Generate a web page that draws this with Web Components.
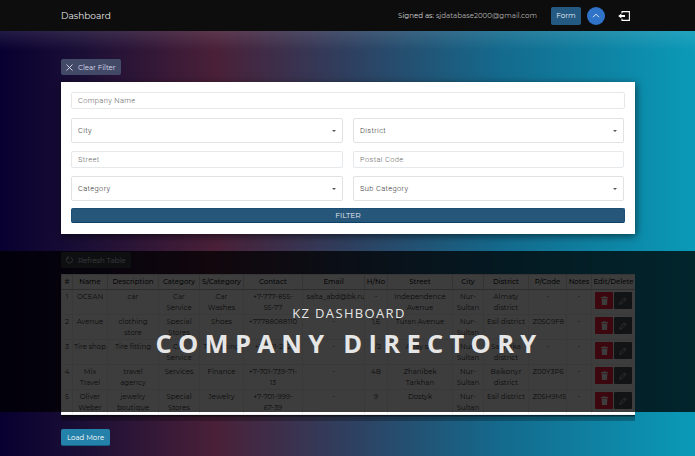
<!DOCTYPE html>
<html><head><meta charset="utf-8"><style>
html,body{margin:0;height:456px;overflow:hidden}
body{font-family:Montserrat,"Open Sans","Liberation Sans",sans-serif}
</style></head><body>
<dash-page></dash-page>
<script>
const ICONS={
x:'<svg width="7" height="7" viewBox="0 0 7 7"><path d="M.5.5l6 6M6.5.5l-6 6" stroke="currentColor" stroke-width=".9" fill="none"/></svg>',
up:'<svg width="8" height="5" viewBox="0 0 8 5"><path d="M1 4.2l3-3 3 3" stroke="currentColor" stroke-width="1" fill="none"/></svg>',
out:'<svg width="12" height="10" viewBox="0 0 12 10"><path d="M4 2.3V.6h7.4v8.8H4V7.7" stroke="#fff" stroke-width="1.1" fill="none"/><path d="M.2 5L3.4 2.4V4H7v2H3.4v1.6z" fill="#fff"/></svg>',
refresh:'<svg width="7" height="8" viewBox="0 0 8 9"><path d="M2.4 1.4A3.4 3.4 0 1 0 5.6 1.4" stroke="currentColor" stroke-width=".9" fill="none"/><path d="M2.6 0v2.6H0" stroke="currentColor" stroke-width=".7" fill="none"/></svg>',
trash:'<svg width="7" height="9" viewBox="0 0 7 9"><path d="M0 1h2.2L2.6.3h1.8l.4.7H7v1H0zM.6 2.6h5.8L6 9H1z" fill="currentColor"/></svg>',
pen:'<svg width="8" height="8" viewBox="0 0 10 10"><path d="M1 9l.5-2.4L7 1.2 8.8 3 3.4 8.5zM6.2 2l1.8 1.8" stroke="currentColor" stroke-width=".9" fill="none"/></svg>'};
function el(name,html,css){customElements.define(name,class extends HTMLElement{constructor(){super();const s=this.attachShadow({mode:'open'});s.innerHTML='<style>'+css+'</style>'+(typeof html==='function'?html(this):html)}})}
el('nav-bar',`<span class="brand">Dashboard</span><span class="sp"></span><span class="who">Signed as: <i>sjdatabase2000@gmail.com</i></span><span class="form">Form</span><span class="up">${ICONS.up}</span><span class="out">${ICONS.out}</span>`,
`:host{display:flex;align-items:center;height:31px;background:#0d0d0d;padding:0 65px 0 61px;box-sizing:border-box;color:#fff}
.brand{font-size:9px;color:#e8e8e8}.sp{flex:1}.who{font-size:7.1px;color:#d8d8d8;margin-right:14px}i{font-style:normal;color:#b4b4b4}
.form{background:#245a82;border-radius:2px;font-size:7.2px;width:30px;height:18px;display:flex;align-items:center;justify-content:center;margin-right:6px;color:#e8eef3}
.up{width:18px;height:18px;border-radius:50%;background:#2f74c9;display:flex;align-items:center;justify-content:center;margin-right:13px;color:#dfe9f6}
.out{display:flex}`);
el('text-field',h=>`<span>${h.getAttribute('label')}</span>`,
`:host{display:flex;align-items:center;height:15px;border:1px solid #e6e9ec;border-radius:2px;padding:0 6px;font:300 7.5px Roboto,sans-serif;letter-spacing:.35px;color:#666;background:#fff}`);
el('select-field',h=>`<span>${h.getAttribute('label')}</span><b></b>`,
`:host{display:flex;align-items:center;justify-content:space-between;height:23px;border:1px solid #e2e2e2;border-radius:2px;padding:0 6px;font:300 7.5px Roboto,sans-serif;letter-spacing:.35px;color:#333;background:#fff}
b{width:0;height:0;border:2px solid transparent;border-top:2.5px solid #555;border-bottom:0}`);
el('filter-card',`<text-field label="Company Name"></text-field>
<div class="g"><select-field label="City"></select-field><select-field label="District"></select-field>
<text-field label="Street"></text-field><text-field label="Postal Code"></text-field>
<select-field label="Category"></select-field><select-field label="Sub Category"></select-field></div>
<div class="btn">FILTER</div>`,
`:host{display:block;background:#fff;padding:10px 10px 11px;box-shadow:1px 2px 8px rgba(0,0,0,.55)}
.g{display:grid;grid-template-columns:272px 271px;gap:8px 10px;margin-top:9px}
.btn{margin-top:7px;height:15px;background:#26567a;border:1px solid #1c4f75;border-bottom:1px solid #0f3f63;border-radius:2px;color:#e6edf3;font-size:7.5px;line-height:14px;text-align:center;box-sizing:border-box}`);
el('ui-btn',h=>`<slot></slot>`,
`:host{display:inline-flex;align-items:center;gap:5px;height:16px;padding:0 5px;border-radius:2px;font-size:7px;box-sizing:border-box}`);
const rows=[
['1','OCEAN','car','Car Service','Car Washes','+7-777-855-<br>55-77','salta_abd@bk.ru','-','Independence Avenue','Nur-Sultan','Almaty district','-','-'],
['2','Avenue','clothing store','Special Stores','Shoes','+77788088110','-','1,E','Turan Avenue','Nur-Sultan','Esil district','Z05G9F8','-'],
['3','Tire shop','Tire fitting','Car Service','Tire fitting','+7-701-262','-','2/2','Abay sq.','Nur-Sultan','Saryarka district','-','-'],
['4','Mix Travel','travel agency','Services','Finance','+7-701-739-71-<br>13','-','4B','Zhanibek Tarkhan','Nur-Sultan','Baikonyr district','Z00Y3P6','-'],
['5','Oliver Weber','jewelry boutique','Special Stores','Jewelry','+7-701-999-<br>67-39','-','9','Dostyk','Nur-Sultan','Esil district','Z05H9M5','-']];
const heads=['#','Name','Description','Category','S/Category','Contact','Email','H/No','Street','City','District','P/Code','Notes','Edit/Delete'];
const widths=[11,35,51,41,44,59,62,23,65,31,45,38,25,44];
const tight=[0,1,5,10];
el('data-table',`<table><colgroup>${widths.map(w=>`<col style="width:${w}px">`).join('')}</colgroup><thead><tr>${heads.map(h=>`<th>${h}</th>`).join('')}</tr></thead><tbody>${rows.map(r=>`<tr>${r.map((c,i)=>`<td class="${tight.includes(i)?'tight':''}">${c}</td>`).join('')}<td class="a"><div><span class="d">${ICONS.trash}</span><span class="e">${ICONS.pen}</span></div></td></tr>`).join('')}</tbody></table>`,
`:host{display:block;background:#fff}
table{border-collapse:collapse;table-layout:fixed;width:574px;font-size:7px;line-height:10.5px;color:#333;background:#fff}
th{font-weight:500;height:15px;padding:0;border:1px solid #ddd;border-bottom:1px solid #bbb;color:#222;white-space:nowrap;box-sizing:border-box}
td{padding:2px 3.5px 0;height:25px;border:1px solid #eee;text-align:center;vertical-align:top;box-sizing:border-box;overflow:hidden}
td.tight{padding:2px 0 0}
td.a{padding:2px 0 0}
td.a div{display:flex;gap:1px;justify-content:center}
.d,.e{width:18px;height:17px;border-radius:1px;display:flex;align-items:center;justify-content:center}
.d{background:#ff2040;color:#fff}.e{background:#4c5257;color:#ddd}`);
el('dash-page',`<nav-bar></nav-bar>
<main>
<ui-btn class="clear">${ICONS.x}<span>Clear Filter</span></ui-btn>
<filter-card></filter-card>
<ui-btn class="refresh">${ICONS.refresh}<span>Refresh Table</span></ui-btn>
<data-table></data-table>
<div class="shade"></div>
<ui-btn class="more">Load More</ui-btn>
</main>
<div class="veil"></div>
<div class="title"><p>KZ DASHBOARD</p><h1>COMPANY DIRECTORY</h1></div>`,
`:host{display:block;position:relative;width:695px;height:456px;overflow:hidden;background:linear-gradient(180deg,rgba(255,255,255,.1) 31px,rgba(255,255,255,0) 50px),linear-gradient(90deg,#080030 0%,#1b0f36 12%,#4a2038 31%,#2f3f5f 50%,#146a8d 72%,#0a9ab8 100%)}
main{display:flex;flex-direction:column;align-items:flex-start;padding:28px 60px 0 61px}
.clear{background:#434a68;color:#dde;margin-bottom:7px}
filter-card{width:574px;box-sizing:border-box;height:152px}
.refresh{background:#3a3f48;color:#e8e8e8;margin-top:18px;padding:0 6px 0 5px}
data-table{margin-top:6px;width:574px;height:141px;overflow:hidden}
.shade{width:574px;height:6px;background:linear-gradient(180deg,rgba(0,0,0,.75) 0,rgba(0,0,0,.3) 40%,rgba(0,0,0,.25) 100%)}
.more{background:#2482aa;color:#fff;margin-top:8px;height:17px;border-bottom:1px solid #145c80;font-size:7px;padding:0 6px}
.veil{position:absolute;left:0;right:0;top:251px;height:161px;background:rgba(0,0,0,.76)}
.title{position:absolute;left:0;right:0;top:304px;padding-left:3px;text-align:center;color:#e6e6e6;font-family:"Open Sans",sans-serif}
p{margin:0;font-size:13px;line-height:19px;letter-spacing:1.35px;font-weight:400}
h1{margin:2px 0 0;font-size:25.5px;line-height:36px;letter-spacing:6.3px;font-weight:700}`);
</script></body></html>
